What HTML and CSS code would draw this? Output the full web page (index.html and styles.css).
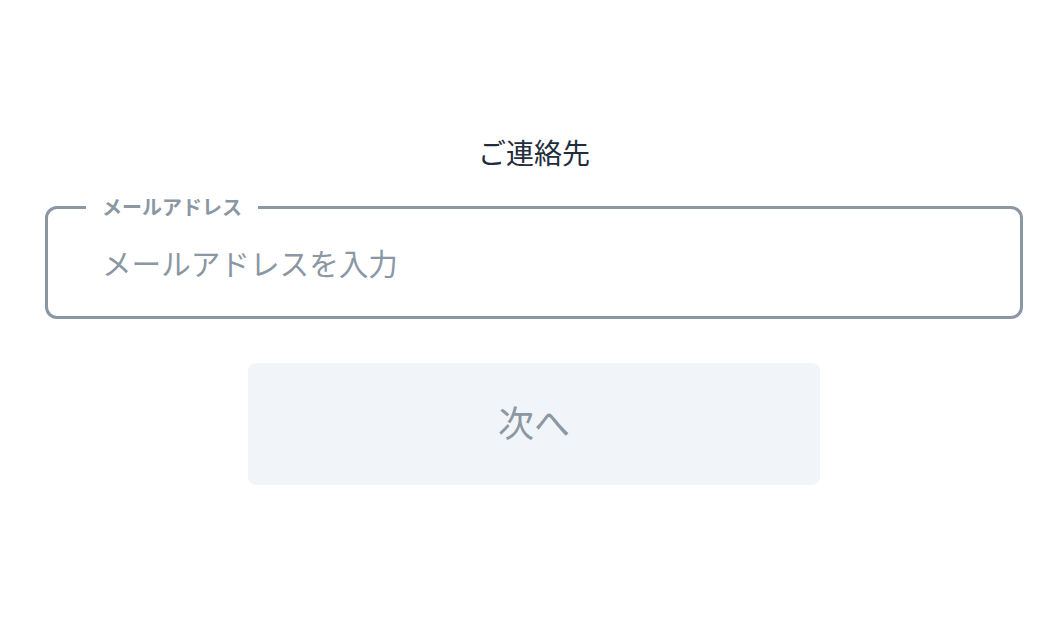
FILE: index.html
```html
<!doctype html>
<html>

<head>
  <meta charset='utf-8'>
  <title>ご連絡先</title>
  <link rel="stylesheet" href="styles.css">
</head>

<body>
  <div class='main'>
    <h1 class='title'>ご連絡先</h1>
    <fieldset class='field'>
      <legend class='field-label'>メールアドレス</legend>
      <input class='field-input' type='email' placeholder='メールアドレスを入力'>
    </fieldset>
    <div class='actions'>
      <button class='next-btn' disabled>次へ</button>
    </div>
  </div>
</body>

</html>
```

FILE: styles.css
```css
* {
  margin: 0;
  padding: 0;
  box-sizing: border-box;
}
body {
  background: #fff;
  font-family: "Noto Sans CJK JP", "Noto Sans", sans-serif;
}
.main {
  padding: 132px 39px 0 45px;
}
.title {
  font-size: 28px;
  font-weight: normal;
  line-height: 40px;
  text-align: center;
  color: #1f2d3d;
}
.field {
  margin-top: 25px;
  border: 3px solid #8b97a3;
  border-radius: 12px;
  padding: 0;
}
.field-label {
  margin-left: 38px;
  padding: 0 16px;
  font-size: 20px;
  font-weight: bold;
  line-height: 20px;
  color: #8b97a3;
}
.field-input {
  display: block;
  width: 100%;
  height: 99px;
  border: none;
  outline: none;
  background: transparent;
  padding: 0 0 8px 54px;
  font-family: inherit;
  font-size: 29.6px;
  color: #1f2d3d;
}
.field-input::placeholder {
  color: #8b97a3;
}
.actions {
  display: flex;
  justify-content: center;
  margin-top: 44px;
}
.next-btn {
  width: 572px;
  height: 122px;
  border: none;
  border-radius: 8px;
  background: #f1f5f9;
  padding-bottom: 6px;
  font-family: inherit;
  font-size: 36px;
  color: #8b97a3;
}
```
